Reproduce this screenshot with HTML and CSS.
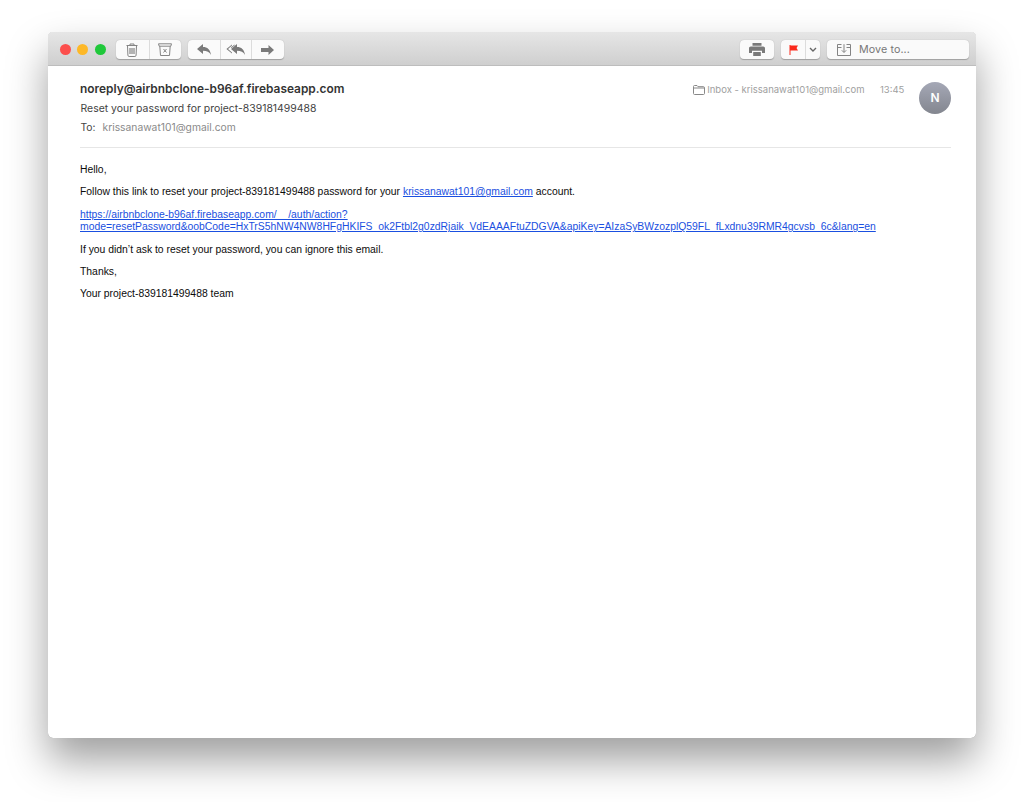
FILE: index.html
```html
<!DOCTYPE html>
<html lang="en">
<head>
<meta charset="utf-8">
<title>Reset your password</title>
<link rel="stylesheet" href="styles.css">
</head>
<body>
<main class="window">
  <header class="toolbar">
    <div class="lights"><span class="light red"></span><span class="light yellow"></span><span class="light green"></span></div>
    <div class="group g-del">
      <button class="btn b-trash"><svg width="12" height="14" viewBox="0 0 12 14" class="ic-line"><path d="M.5 2.500h11M4 2.500V1h4v1.500M1.500 2.800l.4 9.400c0 .8.5 1.300 1.200 1.300h5.800c.7 0 1.200-.5 1.200-1.300l.4-9.400"/><path d="M4 5v6M6 5v6M8 5v6" stroke-width="1.200"/></svg></button>
      <button class="btn b-junk"><svg width="14" height="13" viewBox="0 0 14 13" class="ic-line"><path d="M.5 .8h13l-.7 2.400H1.200zM1.800 3.200l.7 9.300h9l.7-9.300"/><path d="M5.500 6l3 3.500M8.500 6l-3 3.500"/></svg></button>
    </div>
    <div class="group g-reply">
      <button class="btn b-r1"><svg width="14" height="11" viewBox="0 0 14 11" class="ic-fill"><path d="M6 0v3c4.300 0 7.300 2.500 8 8-1.400-3.100-4.200-4.300-8-4.300V10L0 5z"/></svg></button>
      <button class="btn b-r2"><svg width="19" height="11" viewBox="0 0 19 11" class="ic-fill"><path d="M11 0v3c4.300 0 7.300 2.500 8 8-1.400-3.100-4.200-4.300-8-4.300V10L5 5z"/><path d="M6 .4v1.100L2 5l4 3.500v1.100L.4 5zM8.600 .4v1L5.500 4 4.800 3.400z"/></svg></button>
      <button class="btn b-fwd"><svg width="13" height="10" viewBox="0 0 13 10" class="ic-fill"><path d="M7.500 0L13 5 7.500 10V7H0V3h7.500z"/></svg></button>
    </div>
    <div class="spacer"></div>
    <button class="btn solo b-print"><svg width="16" height="13" viewBox="0 0 16 13" class="ic-fill"><path d="M3.500 0h9v2.700h-9zM1.800 3.600h12.400c1 0 1.800.8 1.800 1.800V10h-3V7.800H3V10H0V5.400c0-1 .8-1.800 1.800-1.800zM4.200 9h7.600v4H4.200z"/></svg></button>
    <div class="group g-flag">
      <button class="btn b-flag"><svg width="9" height="10" viewBox="0 0 9 10"><path class="flag" d="M.5 0h1v.6H9L7.500 3l1.500 2.500H1.500V10h-1z"/></svg></button>
      <button class="btn b-chev"><svg width="8" height="6" viewBox="0 0 8 6"><path class="chev" d="M1 1l3 3 3-3"/></svg></button>
    </div>
    <button class="btn solo b-move"><svg width="14" height="12" viewBox="0 0 14 12" class="ic-line thin"><path d="M4.500 .5H.5v11h13V.5h-4M.5 3.500h4M9.500 3.500h4M7 .2v8M4.800 6.300L7 8.500l2.200-2.200"/></svg><span class="move-label">Move to...</span></button>
  </header>

  <section class="content">
    <div class="meta">
      <div class="meta-left">
        <div class="from">noreply@airbnbclone-b96af.firebaseapp.com</div>
        <div class="subject">Reset your password for project-839181499488</div>
        <div class="to"><span class="to-label">To:</span><span class="to-addr">krissanawat101@gmail.com</span></div>
      </div>
      <div class="meta-right">
        <svg class="folder" width="12" height="10" viewBox="0 0 12 10"><path d="M.5 8.500V1.500c0-.6.400-1 1-1h2.500l1 1.200h5.500c.6 0 1 .4 1 1v5.800c0 .6-.4 1-1 1h-9c-.6 0-1-.4-1-1zM.5 3h11"/></svg>
        <span class="mailbox">Inbox - krissanawat101@gmail.com</span>
        <span class="time">13:45</span>
        <span class="avatar">N</span>
      </div>
    </div>
    <article class="body">
      <p>Hello,</p>
      <p>Follow this link to reset your project-839181499488 password for your <a href="#">krissanawat101@gmail.com</a> account.</p>
      <p><a href="#">https://airbnbclone-b96af.firebaseapp.com/__/auth/action?<br>mode=resetPassword&amp;oobCode=HxTrS5hNW4NW8HFgHKIFS_ok2Ftbl2g0zdRjaik_VdEAAAFtuZDGVA&amp;apiKey=AIzaSyBWzozplQ59FL_fLxdnu39RMR4gcvsb_6c&amp;lang=en</a></p>
      <p>If you didn’t ask to reset your password, you can ignore this email.</p>
      <p>Thanks,</p>
      <p>Your project-839181499488 team</p>
    </article>
  </section>
</main>
</body>
</html>
```

FILE: styles.css
```css
* { box-sizing: border-box; }
html, body { margin: 0; height: 100%; }
body {
  background: #fff;
  padding: 32px 48px 64px;
  overflow: hidden;
  font-family: "Inter", "Liberation Sans", sans-serif;
}
.window {
  width: 928px;
  height: 706px;
  display: flex;
  flex-direction: column;
  border-radius: 5px;
  background: #fff;
  box-shadow: 0 0 .5px rgba(0,0,0,.45), 0 22px 40px rgba(0,0,0,.38);
  overflow: hidden;
}
.toolbar {
  height: 34px;
  flex: none;
  display: flex;
  align-items: center;
  padding: 2px 7px 0 11.500px;
  background: linear-gradient(#e6e6e6, #cfcfcf);
  border-bottom: 1px solid #bdbdbd;
}
.lights { display: flex; gap: 6.500px; margin-right: 10px; }
.light { width: 11px; height: 11px; border-radius: 50%; }
.red { background: #fc4f4d; }
.yellow { background: #fdb827; }
.green { background: #1fc83a; }
.group { display: flex; border-radius: 4px; box-shadow: 0 .5px 1px rgba(0,0,0,.25); background: #fafafa; }
.btn {
  height: 19px;
  padding: 0;
  border: 0;
  background: #fafafa;
  display: flex;
  align-items: center;
  justify-content: center;
  border-radius: 4px;
  font: inherit;
}
.group .btn { border-radius: 0; border-left: 1px solid #dcdcdc; background: transparent; }
.group .btn:first-child { border-left: 0; }
.g-del { margin-right: 7px; }
.b-trash { width: 33px; }
.b-junk { width: 32px; }
.b-r1 { width: 32px; }
.b-r2 { width: 31px; }
.b-fwd { width: 33px; }
.spacer { flex: 1; }
.solo { box-shadow: 0 .5px 1px rgba(0,0,0,.25); }
.b-print { width: 34px; margin-right: 7px; }
.g-flag { margin-right: 7px; }
.b-flag { width: 24px; }
.b-chev { width: 15px; }
.b-move { width: 142px; justify-content: flex-start; padding-left: 10px; }
.move-label { margin-left: 8px; font-size: 10.700px; color: #777; letter-spacing: .1px; }
.ic-line { fill: none; stroke: #848484; stroke-width: 1; }
.ic-fill { fill: #7a7a7a; }
.flag { fill: #fb2a1c; }
.chev { fill: none; stroke: #666; stroke-width: 1.400; }
.content { flex: 1; padding: 0 25px 0 32px; }
.meta {
  display: flex;
  justify-content: space-between;
  height: 82px;
  border-bottom: 1px solid #e6e6e6;
  padding-top: 15px;
}
.from { font-size: 11.900px; font-weight: 600; color: #333; line-height: 15px; }
.subject { font-size: 10.450px; color: #444; line-height: 15px; margin: 5px 0 0 .5px; }
.to { font-size: 10.300px; line-height: 14px; margin: 4px 0 0 .5px; }
.to-label { color: #444; margin-right: 7px; }
.to-addr { color: #8a8a8a; }
.meta-right { display: flex; align-items: flex-start; height: 33px; font-size: 9.500px; color: #a0a0a0; line-height: 16px; padding-top: 1px; }
.folder { fill: none; stroke: #888; stroke-width: 1; margin: 3px 2px 0 0; }
.time { margin-left: 15.500px; width: 39px; }
.avatar {
  width: 32px;
  height: 32px;
  border-radius: 50%;
  display: flex;
  align-items: center;
  justify-content: center;
  background: linear-gradient(#a5a8b6, #83868f);
  color: #fff;
  font-size: 12px;
  font-weight: 600;
}
.body {
  font-family: "Liberation Sans", Arial, sans-serif;
  font-size: 10.390px;
  line-height: 12.500px;
  color: #0c0c0c;
  padding-top: 16px;
}
.body p { margin: 0 0 9.900px; }
.body a { color: #1a4fe0; text-decoration: underline; }
```
